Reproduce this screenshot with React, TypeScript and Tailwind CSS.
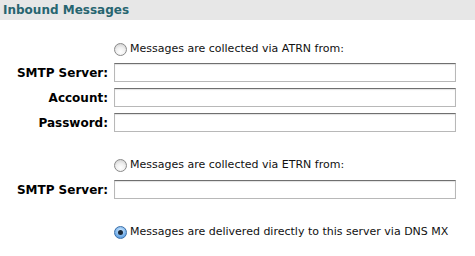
import React from "react";

const font = { fontFamily: '"DejaVu Sans", Verdana, sans-serif' };

function Radio({ checked = false }: { checked?: boolean }) {
  return checked ? (
    <span className="relative inline-flex h-[13px] w-[13px] shrink-0 items-center justify-center rounded-full border border-[#3b6fa8] bg-[radial-gradient(circle_at_50%_35%,#d6ecff_0%,#7fb6ec_55%,#3a86d6_100%)]">
      <span className="h-[5px] w-[5px] rounded-full bg-[#1b2a3a]" />
    </span>
  ) : (
    <span className="inline-block h-[13px] w-[13px] shrink-0 rounded-full border border-[#8a8a8a] bg-[radial-gradient(circle_at_50%_70%,#ffffff_0%,#f0f0f0_45%,#c8c8c8_100%)]" />
  );
}

function RadioRow({ text, checked }: { text: string; checked?: boolean }) {
  return (
    <>
      <div />
      <label className="flex h-[16px] items-center gap-[3px] text-[11px] text-[#111]">
        <Radio checked={checked} />
        <span>{text}</span>
      </label>
    </>
  );
}

function Field({ label }: { label: string }) {
  return (
    <>
      <div className="flex h-[19px] items-center justify-end text-[12px] font-bold text-black">{label}</div>
      <input
        type="text"
        className="h-[19px] w-[342px] border border-[#b8b8b8] border-t-[#6f6f6f] bg-white shadow-[inset_0_1px_1px_rgba(0,0,0,0.12)] outline-none"
      />
    </>
  );
}

export default function App() {
  return (
    <div className="h-[256px] w-[475px] bg-white" style={font}>
      <div className="flex h-[20px] items-center bg-[#e7e7e7] pl-[3px] text-[12px] font-bold text-[#276570]">
        Inbound Messages
      </div>
      <div className="grid grid-cols-[108px_342px] gap-x-[6px] pt-[21px]">
        <RadioRow text="Messages are collected via ATRN from:" />
        <div className="col-span-2 h-[6px]" />
        <Field label="SMTP Server:" />
        <div className="col-span-2 h-[6px]" />
        <Field label="Account:" />
        <div className="col-span-2 h-[6px]" />
        <Field label="Password:" />
        <div className="col-span-2 h-[25px]" />
        <RadioRow text="Messages are collected via ETRN from:" />
        <div className="col-span-2 h-[7px]" />
        <Field label="SMTP Server:" />
        <div className="col-span-2 h-[25px]" />
        <RadioRow text="Messages are delivered directly to this server via DNS MX" checked />
      </div>
    </div>
  );
}
